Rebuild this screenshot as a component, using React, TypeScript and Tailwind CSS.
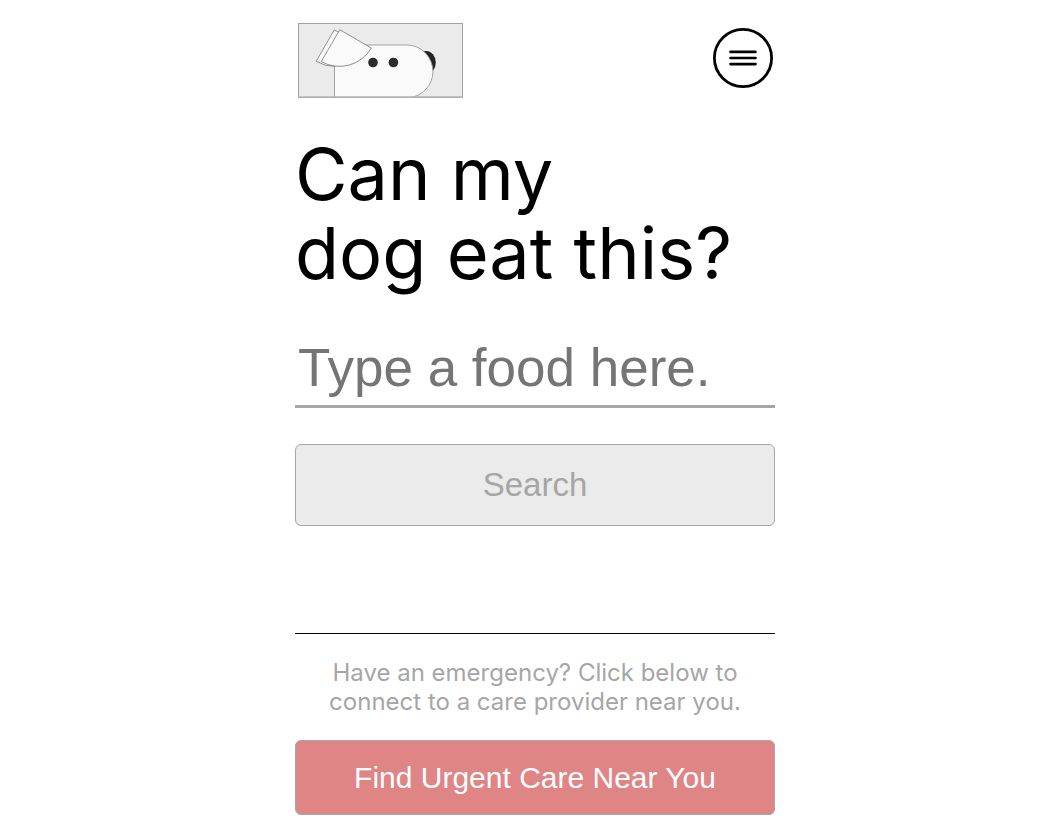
function DogLogo() {
  return (
    <svg viewBox="0 0 165 75" className="block h-[75px] w-[165px]" role="img" aria-label="Dog with its ear raised">
      <rect x="0.5" y="0.5" width="164" height="74" fill="#ebebeb" stroke="#a3a3a3" />
      <ellipse cx="128" cy="39.5" rx="9.8" ry="11.6" fill="#232323" />
      <path d="M36.5 74.5V22H109A26 27 0 0 1 135 49A26 27 0 0 1 112 74.5Z" fill="#fafafa" stroke="#999" strokeWidth="0.9" />
      <path d="M0 74H165" stroke="#b5b5b5" strokeWidth="1.5" />
      <path d="M40.5 9.2L36.2 6.9L18.2 38.3A36.7 36.7 0 0 0 37 43.4Z" fill="#fafafa" stroke="#777" strokeWidth="0.8" />
      <path d="M41.7 6.7L73.3 25A36.8 36.8 0 0 1 23.3 38.6Z" fill="#fafafa" stroke="#777" strokeWidth="0.8" />
      <circle cx="75" cy="39.5" r="4.8" fill="#2b2b2b" />
      <circle cx="95.4" cy="39.5" r="4.8" fill="#2b2b2b" />
    </svg>
  );
}

function MenuIcon() {
  return (
    <svg viewBox="0 0 60 60" className="block size-[60px]" fill="none" stroke="#000" aria-hidden="true">
      <circle cx="30" cy="30" r="28.6" strokeWidth="2.8" />
      <path d="M17.5 23.9H42.5M17.5 30H42.5M17.5 36.1H42.5" strokeWidth="2.6" strokeLinecap="round" />
    </svg>
  );
}

export default function App() {
  return (
    <div className="min-h-screen bg-white pt-[23px] pb-4 pl-[11px] font-['Inter',sans-serif] text-black">
      <div className="mx-auto w-full max-w-[480px]">
        <header className="flex items-start justify-between pr-0.5 pl-[3px]">
          <a href="/">
            <DogLogo />
          </a>
          <button type="button" aria-label="Menu" className="mt-[5px] rounded-full">
            <MenuIcon />
          </button>
        </header>

        <main>
          <h1 className="mt-9 text-[72px] leading-[79px]">
            Can my
            <br />
            dog eat this?
          </h1>

          <form className="mt-9" onSubmit={(event) => event.preventDefault()}>
            <input
              type="text"
              aria-label="Food"
              placeholder="Type a food here."
              className="block h-[80px] w-full border-b-3 border-[#a6a6a6] px-[3px] pt-0.5 font-['Liberation_Sans',sans-serif] text-[53px] outline-none placeholder:text-[#757575] placeholder:opacity-100"
            />
            <button
              type="submit"
              className="mt-9 block h-[82px] w-full rounded-[6px] border border-[#a6a6a6] bg-[#ebebeb] font-['Liberation_Sans',sans-serif] text-[33px] text-[#a6a6a6]"
            >
              Search
            </button>
          </form>
        </main>

        <footer className="mt-[107px] border-t border-black pt-6">
          <p className="text-center text-2xl leading-[29px] text-[#a6a6a6]">
            Have an emergency? Click below to
            <br />
            connect to a care provider near you.
          </p>
          <button
            type="button"
            className="mt-6 block h-[75px] w-full rounded-[6px] border border-[#a6a6a6] bg-[#df8585] font-['Liberation_Sans',sans-serif] text-[30px] text-white"
          >
            Find Urgent Care Near You
          </button>
        </footer>
      </div>
    </div>
  );
}
